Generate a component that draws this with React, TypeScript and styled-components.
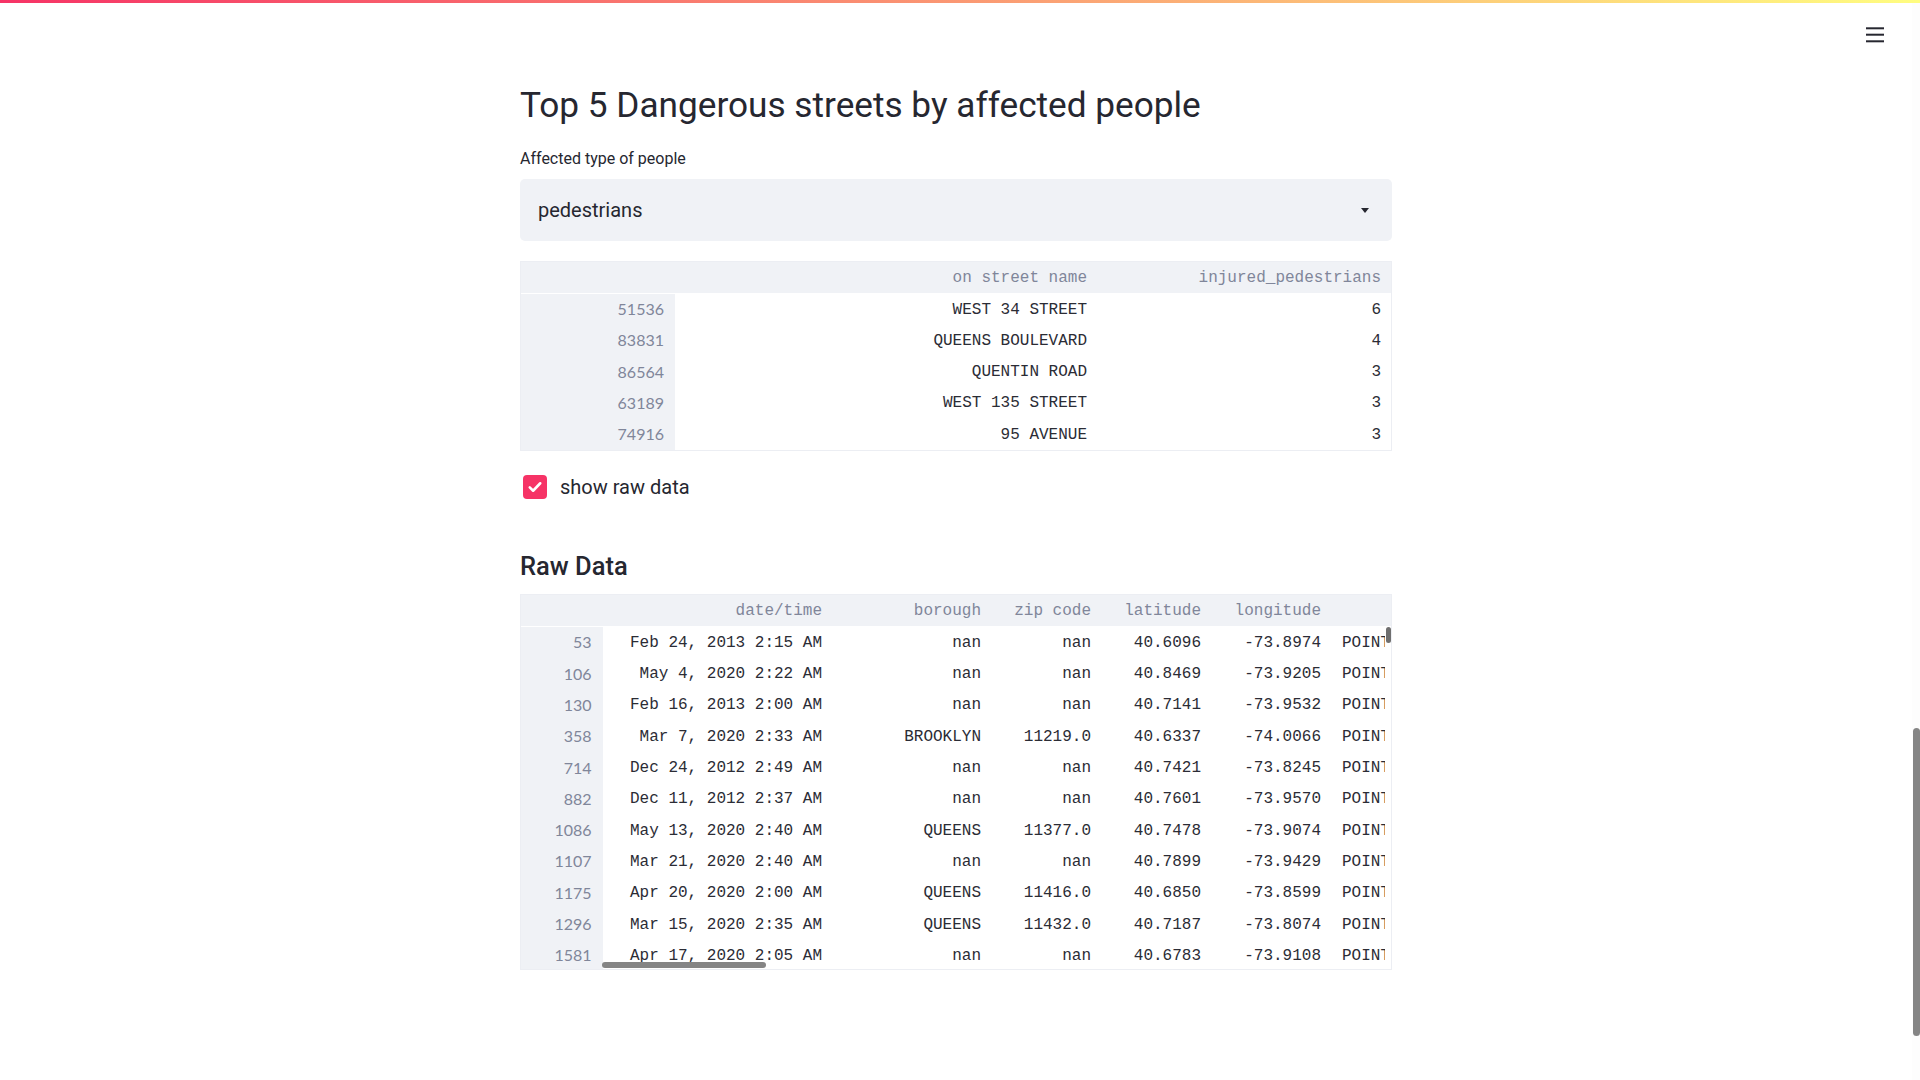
import React from 'react';
import styled, { createGlobalStyle } from 'styled-components';

const GlobalStyle = createGlobalStyle`
  html, body { margin: 0; padding: 0; background: #ffffff; }
  body { font-family: Roboto, "Liberation Sans", sans-serif; color: #262730; }
  * { box-sizing: border-box; }
`;

const AppShell = styled.div`
  display: flex;
  flex-direction: column;
  width: 1920px;
  height: 1080px;
  overflow: hidden;
  background: #ffffff;
`;

const Decoration = styled.div`
  flex: none;
  height: 3px;
  background: linear-gradient(90deg, #f63366, #fffd80);
`;

const Body = styled.div`
  display: flex;
  flex: 1;
  min-height: 0;
`;

const Main = styled.main`
  flex: 1;
  display: flex;
  flex-direction: column;
  min-width: 0;
`;

const Toolbar = styled.header`
  flex: none;
  height: 62px;
  display: flex;
  align-items: center;
  justify-content: flex-end;
  padding-right: 28px;
`;

const MenuButton = styled.button`
  border: 0;
  background: transparent;
  padding: 0;
  width: 18px;
  height: 17px;
  display: flex;
  color: #262730;
  cursor: pointer;
`;

const PageScroll = styled.div`
  flex: none;
  width: 8px;
  padding: 725px 0 0 1px;
  background: #fdfdfd;
`;

const PageThumb = styled.div`
  width: 7px;
  height: 308px;
  border-radius: 4px;
  background: #858585;
`;

const Block = styled.div`
  width: 872px;
  margin: 0 auto;
  display: flex;
  flex-direction: column;
  padding-top: 19px;
`;

const Title = styled.h2`
  margin: 0;
  font-size: 35.2px;
  font-weight: 400;
  line-height: 42px;
  color: #262730;
`;

const FieldLabel = styled.label`
  margin-top: 23px;
  font-size: 16px;
  line-height: 20px;
  color: #262730;
`;

const Select = styled.div`
  margin-top: 10px;
  height: 62px;
  border-radius: 5px;
  background: #f0f2f6;
  display: flex;
  align-items: center;
  justify-content: space-between;
  padding: 0 23px 0 18px;
  font-size: 20px;
  color: #262730;
`;

const Caret = styled.svg`
  width: 8px;
  height: 5px;
  display: block;
`;

const TableFrame = styled.div<{ $gap: number; $height?: number }>`
  position: relative;
  margin-top: ${p => p.$gap}px;
  height: ${p => (p.$height ? `${p.$height}px` : 'auto')};
  border: 1px solid #eceef3;
  overflow: hidden;
`;

const Row = styled.div<{ $cols: string; $h: number; $head?: boolean; $gutter?: number }>`
  display: grid;
  grid-template-columns: ${p => p.$cols};
  height: ${p => p.$h}px;
  padding-right: ${p => p.$gutter ?? 0}px;
  background: ${p => (p.$head ? '#f0f2f6' : '#ffffff')};
  border-bottom: ${p => (p.$head ? '1px solid #ffffff' : '0')};
`;

const Cell = styled.div<{ $kind: 'head' | 'index' | 'data'; $left?: boolean }>`
  display: flex;
  align-items: center;
  justify-content: ${p => (p.$left ? 'flex-start' : 'flex-end')};
  padding: 0 ${p => (p.$kind === 'index' ? '11px' : p.$left ? '0' : '10px')} ${p => (p.$kind === 'index' ? '2px' : '0')} ${p => (p.$left ? '11px' : '10px')};
  white-space: nowrap;
  overflow: hidden;
  font-family: ${p => (p.$kind === 'index' ? 'Lato, Roboto, sans-serif' : '"Liberation Mono", "DejaVu Sans Mono", monospace')};
  font-size: 16px;
  color: ${p => (p.$kind === 'data' ? '#2b2c35' : '#80869a')};
  background: ${p => (p.$kind === 'index' ? '#f0f2f6' : 'transparent')};
`;

const CheckRow = styled.label`
  margin-top: 24px;
  display: flex;
  align-items: center;
  gap: 13px;
  padding-left: 3px;
  height: 24px;
  font-size: 20px;
  color: #262730;
`;

const CheckBox = styled.span`
  width: 24px;
  height: 24px;
  border-radius: 4px;
  background: #f63366;
  display: flex;
  align-items: center;
  justify-content: center;
`;

const SubTitle = styled.h3`
  margin: 52px 0 0;
  font-size: 25.5px;
  font-weight: 500;
  line-height: 30px;
  color: #262730;
`;

const HScrollThumb = styled.div`
  position: absolute;
  left: 81px;
  bottom: 1px;
  width: 164px;
  height: 6px;
  border-radius: 3px;
  background: #858585;
`;

const VScrollThumb = styled.div`
  position: absolute;
  right: 0;
  top: 32px;
  width: 5px;
  height: 16px;
  border-radius: 3px;
  background: #6f6f6f;
`;

const streets = [
  ['51536', 'WEST 34 STREET', '6'],
  ['83831', 'QUEENS BOULEVARD', '4'],
  ['86564', 'QUENTIN ROAD', '3'],
  ['63189', 'WEST 135 STREET', '3'],
  ['74916', '95 AVENUE', '3'],
];

const raw = [
  ['53', 'Feb 24, 2013 2:15 AM', 'nan', 'nan', '40.6096', '-73.8974'],
  ['106', 'May 4, 2020 2:22 AM', 'nan', 'nan', '40.8469', '-73.9205'],
  ['130', 'Feb 16, 2013 2:00 AM', 'nan', 'nan', '40.7141', '-73.9532'],
  ['358', 'Mar 7, 2020 2:33 AM', 'BROOKLYN', '11219.0', '40.6337', '-74.0066'],
  ['714', 'Dec 24, 2012 2:49 AM', 'nan', 'nan', '40.7421', '-73.8245'],
  ['882', 'Dec 11, 2012 2:37 AM', 'nan', 'nan', '40.7601', '-73.9570'],
  ['1086', 'May 13, 2020 2:40 AM', 'QUEENS', '11377.0', '40.7478', '-73.9074'],
  ['1107', 'Mar 21, 2020 2:40 AM', 'nan', 'nan', '40.7899', '-73.9429'],
  ['1175', 'Apr 20, 2020 2:00 AM', 'QUEENS', '11416.0', '40.6850', '-73.8599'],
  ['1296', 'Mar 15, 2020 2:35 AM', 'QUEENS', '11432.0', '40.7187', '-73.8074'],
  ['1581', 'Apr 17, 2020 2:05 AM', 'nan', 'nan', '40.6783', '-73.9108'],
];

const COLS1 = '154px 422px 1fr';
const COLS2 = '81.5px 229.5px 159px 110px 110px 120px 1fr';

export default function App() {
  return (
    <>
      <GlobalStyle />
      <AppShell>
        <Decoration />
        <Body>
          <Main>
            <Toolbar>
              <MenuButton aria-label="menu">
                <svg width="18" height="17" viewBox="0 0 18 17" fill="currentColor">
                  <rect x="0" y="1.3" width="18" height="2" />
                  <rect x="0" y="7.7" width="18" height="2" />
                  <rect x="0" y="14.3" width="18" height="2" />
                </svg>
              </MenuButton>
            </Toolbar>
            <Block>
              <Title>Top 5 Dangerous streets by affected people</Title>
              <FieldLabel>Affected type of people</FieldLabel>
              <Select>
                <span>pedestrians</span>
                <Caret viewBox="0 0 8 5">
                  <path d="M0 0 H8 L4 5 Z" fill="#262730" />
                </Caret>
              </Select>
              <TableFrame $gap={20}>
                <Row $cols={COLS1} $h={32} $head>
                  <Cell $kind="head" />
                  <Cell $kind="head">on street name</Cell>
                  <Cell $kind="head">injured_pedestrians</Cell>
                </Row>
                {streets.map(r => (
                  <Row key={r[0]} $cols={COLS1} $h={31.25}>
                    <Cell $kind="index">{r[0]}</Cell>
                    <Cell $kind="data">{r[1]}</Cell>
                    <Cell $kind="data">{r[2]}</Cell>
                  </Row>
                ))}
              </TableFrame>
              <CheckRow>
                <CheckBox>
                  <svg width="18" height="18" viewBox="0 0 24 24" fill="none" stroke="#ffffff" strokeWidth="3.4" strokeLinecap="round" strokeLinejoin="round">
                    <path d="M5 12.5l4.5 4.5L19 7" />
                  </svg>
                </CheckBox>
                show raw data
              </CheckRow>
              <SubTitle>Raw Data</SubTitle>
              <TableFrame $gap={13} $height={376}>
                <Row $cols={COLS2} $h={32} $head>
                  <Cell $kind="head" />
                  <Cell $kind="head">date/time</Cell>
                  <Cell $kind="head">borough</Cell>
                  <Cell $kind="head">zip code</Cell>
                  <Cell $kind="head">latitude</Cell>
                  <Cell $kind="head">longitude</Cell>
                  <Cell $kind="head" />
                </Row>
                {raw.map(r => (
                  <Row key={r[0]} $cols={COLS2} $h={31.3} $gutter={6}>
                    <Cell $kind="index">{r[0]}</Cell>
                    <Cell $kind="data">{r[1]}</Cell>
                    <Cell $kind="data">{r[2]}</Cell>
                    <Cell $kind="data">{r[3]}</Cell>
                    <Cell $kind="data">{r[4]}</Cell>
                    <Cell $kind="data">{r[5]}</Cell>
                    <Cell $kind="data" $left>{`POINT (${r[5]} ${r[4]})`}</Cell>
                  </Row>
                ))}
                <VScrollThumb />
                <HScrollThumb />
              </TableFrame>
            </Block>
          </Main>
          <PageScroll>
            <PageThumb />
          </PageScroll>
        </Body>
      </AppShell>
    </>
  );
}
